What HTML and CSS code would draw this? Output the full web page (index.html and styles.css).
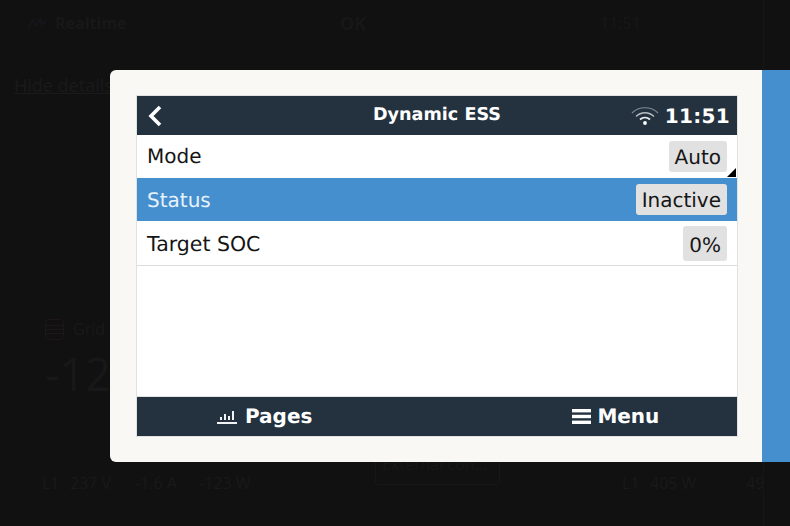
FILE: index.html
```html
<!DOCTYPE html>
<html lang="en">
<head>
<meta charset="utf-8">
<title>Dynamic ESS</title>
<link rel="stylesheet" href="styles.css">
</head>
<body>
<div class="page">
  <div class="bg-row">
    <span class="bg-cell-name"><svg class="bg-wave" width="20" height="12" viewBox="0 0 20 12"><path d="M1 11 L6 3 L9 9 L13 2 L15 8 L19 4" fill="none" stroke="#15161a" stroke-width="2"/></svg><b>Realtime</b></span>
    <span class="bg-cell-ok">OK</span>
    <span>11:51</span>
  </div>
  <div class="bg-link">Hide details</div>
  <div class="bg-grid-label"><svg class="bg-grid-icon" width="19" height="21" viewBox="0 0 19 21"><g fill="none" stroke="#1e1718"><rect x=".5" y=".5" width="18" height="20" rx="3"/><path d="M1 6.5 H18 M1 10.5 H18 M1 14.5 H18"/></g></svg>Grid</div>
  <div class="bg-big">-123 W</div>
  <div class="bg-bottom">
    <span class="bg-l1">L1</span><span class="bg-v">237 V</span><span class="bg-a">-1.6 A</span><span class="bg-w">-123 W</span>
    <span class="bg-btn">External con...</span>
    <span class="bg-l1b">L1</span><span class="bg-w2">405 W</span><span class="bg-49">49</span>
  </div>
  <div class="bg-edge"></div>
  <div class="modal">
    <div class="screen">
      <header class="bar top">
        <svg class="back" width="16" height="24" viewBox="0 0 16 24"><path d="M13 3 L4 12 L13 21" fill="none" stroke="#fff" stroke-width="3.6"/></svg>
        <span class="title">Dynamic ESS</span>
        <span class="status">
          <svg class="wifi" width="28" height="20" viewBox="0 0 28 20">
            <path d="M1 8 C8 1 20 1 27 8" fill="none" stroke="#7f8b97" stroke-width="1.2"/>
            <path d="M5 11.5 C10 6.5 18 6.5 23 11.5" fill="none" stroke="#b9c0c6" stroke-width="1.3"/>
            <path d="M9 14.5 C12 11.8 16 11.8 19 14.5" fill="none" stroke="#eef0f2" stroke-width="1.7"/>
            <circle cx="14" cy="18" r="1.9" fill="#fff"/>
          </svg>
          <span class="time">11:51</span>
        </span>
      </header>
      <div class="row"><span class="lift">Mode</span><span class="val">Auto</span><span class="corner"></span></div>
      <div class="row sel"><span>Status</span><span class="val">Inactive</span></div>
      <div class="row last"><span class="wide">Target SOC</span><span class="val tall">0%</span></div>
      <div class="fill"></div>
      <footer class="bar bottom">
        <span class="tab pages">
          <svg width="20" height="16" viewBox="0 0 20 16"><g fill="#f2f3f4"><rect x="3" y="9" width="2" height="3"/><rect x="7" y="6" width="2" height="6"/><rect x="11" y="8" width="2" height="4"/><rect x="15" y="3" width="2" height="9"/><rect x="0" y="14" width="20" height="2"/></g></svg>
          Pages</span>
        <span class="tab menu">
          <svg width="19" height="15" viewBox="0 0 19 15"><g fill="#fff"><rect y="0" width="19" height="3.4"/><rect y="5.8" width="19" height="3.4"/><rect y="11.6" width="19" height="3.4"/></g></svg>
          Menu</span>
      </footer>
    </div>
    <div class="side"></div>
  </div>
</div>
</body>
</html>
```
FILE: styles.css
```css
* { box-sizing: border-box; }
html, body { margin: 0; padding: 0; }
body { background: #111111; overflow: hidden; }
.page {
  position: relative;
  width: 790px;
  height: 526px;
  overflow: hidden;
  background: #111111;
  color: #181818;
  font-family: "Open Sans", sans-serif;
  padding: 11px 0 0 27px;
}
.bg-row { display: flex; font-size: 16px; height: 24px; align-items: center; }
.bg-cell-name { width: 313px; display: flex; align-items: center; gap: 8px; color: #181818; }
.bg-cell-ok { width: 260px; font-weight: 700; font-size: 18px; color: #171717; }
.bg-link { margin: 38px 0 0 -13px; font-size: 18px; text-decoration: underline; color: #1a1a1a; height: 25px; }
.bg-grid-label { margin: 220px 0 0 18px; display: flex; align-items: center; gap: 9px; font-size: 16px; height: 22px; color: #191919; }
.bg-big { margin: 4px 0 0 18px; font-size: 45px; line-height: 60px; color: #181818; white-space: nowrap; }
.bg-bottom { margin: 67px 0 0 15px; display: flex; font-size: 16px; color: #191919; white-space: nowrap; align-items: center; height: 24px; }
.bg-l1 { width: 28px; }
.bg-v { width: 65px; }
.bg-a { width: 64px; }
.bg-w { width: 176px; }
.bg-btn { width: 125px; height: 32px; align-self: flex-start; margin-top: -18px; padding: 0 6px; line-height: 20px; border: 1px solid #171717; border-radius: 4px; overflow: hidden; color: #171717; }
.bg-l1b { margin-left: 122px; width: 28px; }
.bg-w2 { width: 96px; }
.bg-edge { position: absolute; left: 763px; top: 0; width: 1px; height: 526px; background: #161616; }

.modal {
  position: absolute;
  left: 110px;
  top: 70px;
  width: 680px;
  height: 392px;
  background: #f9f8f4;
  border-radius: 6px 0 0 6px;
  padding: 25px 24px 25px 26px;
}
.side { position: absolute; top: 0; right: 0; width: 28px; height: 100%; background: #468fce; }
.screen {
  width: 602px;
  height: 342px;
  border: 1px solid #dfe1e3;
  background: #fff;
  display: flex;
  flex-direction: column;
  font-family: "DejaVu Sans", sans-serif;
  text-rendering: geometricPrecision;
  position: relative;
}
.bar { background: #24323f; color: #fff; display: flex; align-items: center; flex: none; font-weight: 700; }
.top { height: 39px; padding: 0 7px 0 10px; position: relative; justify-content: space-between; }
.title { position: absolute; left: 0; right: 0; top: 9px; text-align: center; font-size: 17.6px; line-height: 20px; }
.status { display: flex; align-items: center; gap: 6px; }
.wifi { margin-top: -2px; }
.time { font-size: 20px; letter-spacing: 0.3px; line-height: 36px; }
.row {
  height: 43px;
  display: flex;
  align-items: center;
  justify-content: space-between;
  padding: 0 10px;
  font-size: 20px;
  color: #151515;
  position: relative;
}
.row.sel { background: #468fce; color: #e6f2fa; }
.row.last { height: 45px; border-bottom: 1px solid #dcdcdc; }
.wide { font-size: 20.5px; line-height: 25px; padding-top: 3px; }
.lift { line-height: 23px; padding-bottom: 1px; }
.val {
  background: #e1e1e1;
  color: #151515;
  border-radius: 3px;
  height: 31px;
  line-height: 33px;
  padding: 0 6px;
}
.val.tall { height: 35px; line-height: 38px; }
.corner {
  position: absolute;
  right: 1px;
  bottom: 1px;
  width: 0;
  height: 0;
  border-style: solid;
  border-width: 0 0 9px 9px;
  border-color: transparent transparent #000 transparent;
}
.fill { flex: 1; }
.bottom { height: 40px; font-size: 20px; border-top: 1px solid #dfe1e3; padding-bottom: 1px; }
.tab { display: flex; align-items: center; gap: 8px; position: relative; }
.pages { margin-left: 80px; }
.menu { margin-left: 260px; gap: 6px; }
```
